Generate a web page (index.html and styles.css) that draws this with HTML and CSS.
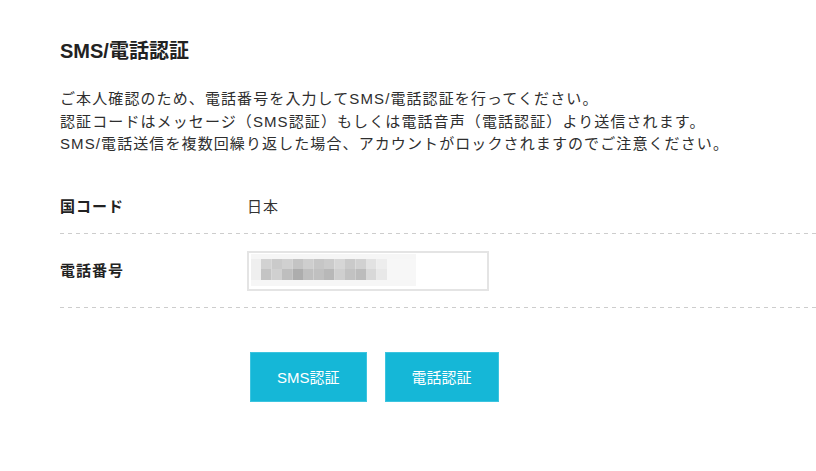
FILE: index.html
```html
<!DOCTYPE html>
<html lang="ja">
<head>
  <meta charset="UTF-8">
  <title>SMS/電話認証</title>
  <link rel="stylesheet" href="styles.css">
</head>
<body>

  <div class="verify">
    <h1 class="verify-title">SMS/電話認証</h1>
    <p class="verify-note">
      ご本人確認のため、電話番号を入力してSMS/電話認証を行ってください。<br>
      認証コードはメッセージ（SMS認証）もしくは電話音声（電話認証）より送信されます。<br>
      SMS/電話送信を複数回繰り返した場合、アカウントがロックされますのでご注意ください。
    </p>

    <div class="form-table">
      <div class="form-row">
        <div class="form-label">国コード</div>
        <div class="form-value">日本</div>
      </div>
      <div class="form-row tall">
        <div class="form-label">電話番号</div>
        <div class="form-value">
          <div class="phone-field">
            <!-- number is masked in the capture -->
            <svg class="mosaic" width="165" height="32" viewBox="0 0 165 32">
              <g fill="#f6f6f6"><rect x="0" y="0" width="165" height="5"/><rect x="0" y="26" width="165" height="6"/></g>
              <rect x="0" y="5" width="10" height="21" fill="#efefef"/>
              <rect x="10" y="5" width="10.5" height="10" fill="#d2d2d2"/>
              <rect x="20.5" y="5" width="10.5" height="10" fill="#cacaca"/>
              <rect x="31" y="5" width="10.5" height="10" fill="#d0d0d0"/>
              <rect x="41.5" y="5" width="10.5" height="10" fill="#c4c4c4"/>
              <rect x="52" y="5" width="10.5" height="10" fill="#cecece"/>
              <rect x="62.5" y="5" width="10.5" height="10" fill="#c6c6c6"/>
              <rect x="73" y="5" width="10.5" height="10" fill="#cbcbcb"/>
              <rect x="83.5" y="5" width="10.5" height="10" fill="#d6d6d6"/>
              <rect x="94" y="5" width="10.5" height="10" fill="#cacaca"/>
              <rect x="104.5" y="5" width="10.5" height="10" fill="#d1d1d1"/>
              <rect x="115" y="5" width="10.5" height="10" fill="#e2e2e2"/>
              <rect x="125.5" y="5" width="10.5" height="10" fill="#ededed"/>
              <rect x="10" y="15" width="10.5" height="11" fill="#c4c4c4"/>
              <rect x="20.5" y="15" width="10.5" height="11" fill="#d0d0d0"/>
              <rect x="31" y="15" width="10.5" height="11" fill="#bebebe"/>
              <rect x="41.5" y="15" width="10.5" height="11" fill="#adadad"/>
              <rect x="52" y="15" width="10.5" height="11" fill="#bfbfbf"/>
              <rect x="62.5" y="15" width="10.5" height="11" fill="#c0c0c0"/>
              <rect x="73" y="15" width="10.5" height="11" fill="#b8b8b8"/>
              <rect x="83.5" y="15" width="10.5" height="11" fill="#cfcfcf"/>
              <rect x="94" y="15" width="10.5" height="11" fill="#c2c2c2"/>
              <rect x="104.5" y="15" width="10.5" height="11" fill="#bcbcbc"/>
              <rect x="115" y="15" width="10.5" height="11" fill="#d8d8d8"/>
              <rect x="125.5" y="15" width="10.5" height="11" fill="#e8e8e8"/>
              <rect x="136" y="5" width="29" height="21" fill="#f7f7f7"/>
            </svg>
          </div>
        </div>
      </div>
    </div>

    <div class="actions">
      <button class="btn">SMS認証</button>
      <button class="btn">電話認証</button>
    </div>
  </div>

</body>
</html>
```

FILE: styles.css
```css
body {
  margin: 0;
  background: #fff;
  color: #333;
  font-family: "Liberation Sans", "Noto Sans CJK JP", sans-serif;
}
.verify {
  padding: 36px 0 0 60px;
}
.verify-title {
  margin: 0;
  font-size: 20px;
  line-height: 30px;
  font-weight: bold;
  color: #222;
}
.verify-note {
  margin: 22px 0 0;
  font-size: 15px;
  line-height: 22.5px;
  letter-spacing: 1.1px;
  color: #2e2e2e;
}
.form-table {
  margin-top: 24px;
}
.form-row {
  display: flex;
  align-items: center;
  padding: 16px 0;
  font-size: 15px;
  line-height: 22px;
  letter-spacing: 1px;
  background-image: linear-gradient(to right, #cdcdcd 4px, transparent 4px);
  background-size: 8px 1px;
  background-repeat: repeat-x;
  background-position: left bottom;
}
.form-row.tall {
  padding: 17px 0;
}
.form-label {
  width: 187px;
  font-weight: bold;
  color: #222;
}
.phone-field {
  width: 242px;
  height: 40px;
  border: 2px solid #e4e4e4;
  padding: 1px 0 0 2px;
  box-sizing: border-box;
}
.mosaic {
  display: block;
}
.actions {
  display: flex;
  gap: 18px;
  margin: 44px 0 0 190px;
}
.btn {
  height: 50px;
  padding: 0 26px;
  border: 1px solid #3cc4df;
  background: #15b7d7;
  color: #fff;
  font-family: inherit;
  font-size: 15px;
  cursor: pointer;
}
```
